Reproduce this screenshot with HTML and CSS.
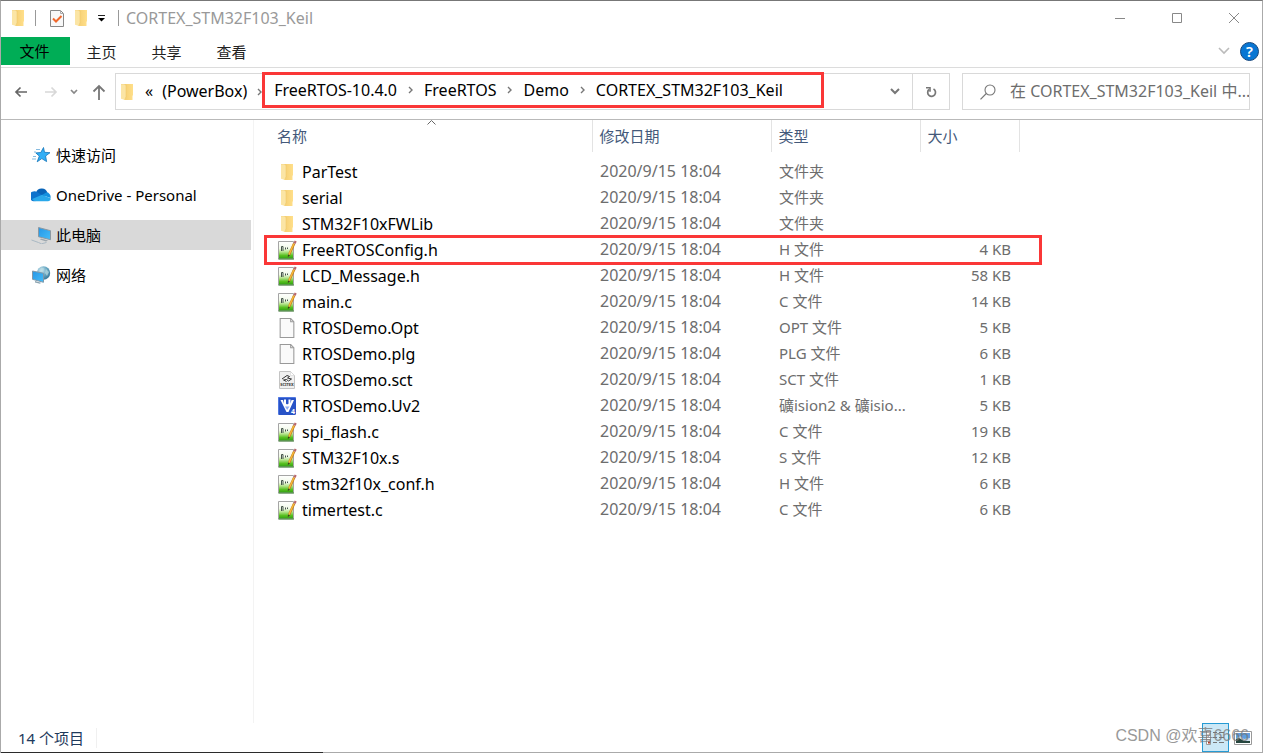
FILE: index.html
```html
<!DOCTYPE html>
<html lang="zh-CN">
<head>
<meta charset="utf-8">
<title>CORTEX_STM32F103_Keil</title>
<link rel="stylesheet" href="styles.css">
</head>
<body>
<svg class="defs" aria-hidden="true">
  <defs>
    <linearGradient id="gold" x1="0" x2="1" y1="0" y2="0"><stop offset="0" stop-color="#f5ce72"/><stop offset="1" stop-color="#ffdf8a"/></linearGradient>
    <linearGradient id="green" x1="0" x2="0" y1="0" y2="1"><stop offset="0" stop-color="#fff"/><stop offset=".4" stop-color="#f1f9e8"/><stop offset=".6" stop-color="#b4e38a"/><stop offset=".8" stop-color="#58c020"/><stop offset="1" stop-color="#2b9c10"/></linearGradient>
    <linearGradient id="screen" x1="0" x2="1" y1="0" y2="1"><stop offset="0" stop-color="#2596e6"/><stop offset="1" stop-color="#45bdf8"/></linearGradient>
    <radialGradient id="globe" cx=".35" cy=".3" r=".8"><stop offset="0" stop-color="#cfe8f1"/><stop offset=".5" stop-color="#6aa9c4"/><stop offset="1" stop-color="#2f6f92"/></radialGradient>
  </defs>
  <symbol id="folder" viewBox="0 0 12 16"><path d="M3 0h9v11.500h-.5V16H3z" fill="url(#gold)"/><path d="M0 0h3.500l1.500 1.500V12.500l-1 3.500L0 14.800z" fill="#fbe5a5"/><path d="M0 0h3.500L5 1.500v11l-1 3" fill="none" stroke="#edc766" stroke-width=".5"/></symbol>
  <symbol id="source" viewBox="0 0 20 20"><path d="M1.500 1.500h15v17.500h-15z" fill="url(#green)" stroke="#a5a5a5"/><path d="M1.500 19h15.500" fill="none" stroke="#4a8c40"/><path d="M4.500 11V6.500h1.500V11M8.500 9.500V7.500M10.500 9V7.500" fill="none" stroke="#45544a"/><path d="M17.200 3.500l-5 11" stroke="#c07a1a" stroke-width="2.400"/><path d="M17 3.500l-5 11" stroke="#f8b93c" stroke-width="1.400"/><path d="M16.500 3l1.200-2.500 2 .9-1.200 2.500z" fill="#b8686c"/><path d="M11 14.500l-.2 2.500 2.200-1.600z" fill="#46391e"/></symbol>
  <symbol id="blank" viewBox="0 0 16 19"><path d="M1.500.5h10l3 3v15h-13z" fill="#fafafa" stroke="#999"/><path d="M11.500.5v3h3" fill="none" stroke="#999"/></symbol>
  <symbol id="chev-r" viewBox="0 0 5 8"><path d="M1 1l3 3-3 3" fill="none" stroke="#777" stroke-width="1.400"/></symbol>
</svg>

<div class="window">
  <header class="titlebar">
    <svg class="folder"><use href="#folder"/></svg>
    <span class="rule"></span>
    <button class="plain props" aria-label="属性"><svg width="14" height="17" viewBox="0 0 14 17"><path d="M.5.500h10l3 3v13H.5z" fill="#f8f8f8" stroke="#888"/><path d="M10.500.5v3h3" fill="none" stroke="#aaa"/><path d="M3 8.500l3 3L11.500 6" fill="none" stroke="#f0682c" stroke-width="2"/></svg></button>
    <button class="plain" aria-label="新建文件夹"><svg class="folder"><use href="#folder"/></svg></button>
    <button class="plain custom" aria-label="自定义"><svg width="7" height="7" viewBox="0 0 7 7"><path d="M0 .5h7" stroke="#222"/><path d="M0 3h7L3.500 6.500z" fill="#000"/></svg></button>
    <span class="rule"></span>
    <h1>CORTEX_STM32F103_Keil</h1>
    <div class="controls">
      <button class="plain" aria-label="最小化"><svg width="12" height="12" viewBox="0 0 12 12"><path d="M1 6.500h10" stroke="#888"/></svg></button>
      <button class="plain" aria-label="最大化"><svg width="12" height="12" viewBox="0 0 12 12"><path d="M1.500 1.500h9v9h-9z" fill="none" stroke="#888"/></svg></button>
      <button class="plain" aria-label="关闭"><svg width="12" height="12" viewBox="0 0 12 12"><path d="M1 1l10 10M11 1L1 11" stroke="#888"/></svg></button>
    </div>
  </header>

  <nav class="ribbon">
    <button class="tab file">文件</button>
    <button class="tab">主页</button>
    <button class="tab">共享</button>
    <button class="tab">查看</button>
    <div class="help">
      <button class="plain" aria-label="展开功能区"><svg width="12" height="8" viewBox="0 0 12 8"><path d="M1 1l5 5 5-5" fill="none" stroke="#bbb" stroke-width="1.600"/></svg></button>
      <button class="plain question">?</button>
    </div>
  </nav>

  <div class="navbar">
    <div class="arrows">
      <button class="plain" aria-label="后退"><svg width="14" height="12" viewBox="0 0 14 12"><path d="M13 6H2M6.500 1.500L2 6l4.500 4.500" fill="none" stroke="#666" stroke-width="1.700"/></svg></button>
      <button class="plain" aria-label="前进"><svg width="14" height="12" viewBox="0 0 14 12"><path d="M1 6h11M7.500 1.500L12 6l-4.500 4.500" fill="none" stroke="#d8d8d8" stroke-width="1.700"/></svg></button>
      <button class="plain" aria-label="最近位置"><svg width="8" height="6" viewBox="0 0 8 6"><path d="M1 1l3 3 3-3" fill="none" stroke="#888" stroke-width="1.700"/></svg></button>
      <button class="plain" aria-label="向上"><svg width="14" height="16" viewBox="0 0 14 16"><path d="M7 16V2M1.500 7.500L7 2l5.500 5.500" fill="none" stroke="#777" stroke-width="1.800"/></svg></button>
    </div>
    <div class="address">
      <svg class="folder"><use href="#folder"/></svg>
      <a class="more" href="#">«</a>
      <a href="#">(PowerBox)</a>
      <svg class="chev first"><use href="#chev-r"/></svg>
      <div class="marked">
        <a href="#">FreeRTOS-10.4.0</a><svg class="chev"><use href="#chev-r"/></svg><a href="#">FreeRTOS</a><svg class="chev"><use href="#chev-r"/></svg><a href="#">Demo</a><svg class="chev"><use href="#chev-r"/></svg><a href="#">CORTEX_STM32F103_Keil</a>
      </div>
      <button class="plain drop" aria-label="历史"><svg width="10" height="7" viewBox="0 0 10 7"><path d="M1 1l4 4 4-4" fill="none" stroke="#777" stroke-width="2"/></svg></button>
      <button class="plain refresh" aria-label="刷新"><svg width="12" height="12" viewBox="0 0 12 12"><path d="M4 3.500A3.900 3.900 0 1 0 8.500 3" fill="none" stroke="#777" stroke-width="1.700"/><path d="M1 1.800h4v4" fill="none" stroke="#777" stroke-width="1.600"/></svg></button>
    </div>
    <label class="search">
      <svg width="16" height="16" viewBox="0 0 16 16"><circle cx="10" cy="6" r="5" fill="none" stroke="#777" stroke-width="1.100"/><path d="M6.300 9.500L.5 15.300" stroke="#777" stroke-width="1.200"/></svg>
      <input type="text" aria-label="搜索" placeholder="在 CORTEX_STM32F103_Keil 中...">
    </label>
  </div>

  <div class="body">
    <aside class="sidebar">
      <a href="#"><svg width="20" height="18" viewBox="0 0 20 18"><path d="M12.500 1.500l1 4.800 5.500.4-4.400 3.300 1 5.600-4.800-3-4.600 3.200 2.100-5.700-3.500-3.200 5-.4z" fill="#31aef5" stroke="#1275ba" stroke-width=".8"/><path d="M5 3.500h4M3 6h2M2 10.500h3M1 13h4" stroke="#86bbe0"/></svg>快速访问</a>
      <a href="#"><svg width="20" height="18" viewBox="0 0 20 18"><path d="M5 6.500a6 6 0 0 1 11.500.5L12 11z" fill="#0864b8"/><path d="M5 15a5 5 0 1 1 1-9L14 11z" fill="#0d73cc"/><path d="M11 9l4.500-2.700A4.700 4.700 0 0 1 19.500 12z" fill="#1490df"/><path d="M1.200 13L11 8.800l8.500 3.400c.6 1.700-.8 3-2.500 3H5c-1.500 0-3.200-.7-3.800-2.200z" fill="#29a8ea"/></svg>OneDrive - Personal</a>
      <a href="#" class="current"><svg width="20" height="18" viewBox="0 0 20 18"><path d="M7.500 1.500l12 3.200v9l-12-3z" fill="url(#screen)" stroke="#8b98a2"/><path d="M10 12.500l7 2-2 1-6-2z" fill="#9ca6ad"/><path d="M.5 14l7 2.500 3 1.300 5-1.300" fill="none" stroke="#a9b8c3"/></svg>此电脑</a>
      <a href="#"><svg width="20" height="18" viewBox="0 0 20 18"><circle cx="12.500" cy="7" r="6.700" fill="url(#globe)"/><path d="M10 1.500l3 1-1 3-3 1zM15 3l3 3-2 4-2-3z" fill="#b9dbe1" opacity=".7"/><path d="M1.500 5l11 2.300v9l-11-3z" fill="url(#screen)" stroke="#7f99aa"/><path d="M4 15l6 1.800-1 1-5-1.300z" fill="#8ba3b0"/></svg>网络</a>
    </aside>
    <main class="content">
      <svg class="sort" width="9" height="5" viewBox="0 0 9 5"><path d="M.5 4.500l4-4 4 4" fill="none" stroke="#666"/></svg>
      <table>
        <colgroup><col class="c-name"><col class="c-date"><col class="c-type"><col class="c-size"></colgroup>
        <thead><tr><th>名称</th><th>修改日期</th><th>类型</th><th>大小</th></tr></thead>
        <tbody>
          <tr><td><span class="cell"><svg class="folder"><use href="#folder"/></svg>ParTest</span></td><td>2020/9/15 18:04</td><td>文件夹</td><td></td></tr>
          <tr><td><span class="cell"><svg class="folder"><use href="#folder"/></svg>serial</span></td><td>2020/9/15 18:04</td><td>文件夹</td><td></td></tr>
          <tr><td><span class="cell"><svg class="folder"><use href="#folder"/></svg>STM32F10xFWLib</span></td><td>2020/9/15 18:04</td><td>文件夹</td><td></td></tr>
          <tr class="boxed"><td><span class="cell"><svg><use href="#source"/></svg>FreeRTOSConfig.h</span></td><td>2020/9/15 18:04</td><td>H 文件</td><td>4 KB</td></tr>
          <tr><td><span class="cell"><svg><use href="#source"/></svg>LCD_Message.h</span></td><td>2020/9/15 18:04</td><td>H 文件</td><td>58 KB</td></tr>
          <tr><td><span class="cell"><svg><use href="#source"/></svg>main.c</span></td><td>2020/9/15 18:04</td><td>C 文件</td><td>14 KB</td></tr>
          <tr><td><span class="cell"><svg><use href="#blank"/></svg>RTOSDemo.Opt</span></td><td>2020/9/15 18:04</td><td>OPT 文件</td><td>5 KB</td></tr>
          <tr><td><span class="cell"><svg><use href="#blank"/></svg>RTOSDemo.plg</span></td><td>2020/9/15 18:04</td><td>PLG 文件</td><td>6 KB</td></tr>
          <tr><td><span class="cell"><svg class="small" viewBox="0 0 16 18"><path d="M.5.500h11l4 4v13H.5z" fill="#f0f0f0" stroke="#c4c4c4"/><path d="M11.500.5v4h4z" fill="#fff" stroke="#ccc" stroke-width=".5"/><path d="M3 8l5-3.500 2.500 1-2 1.500 4 1-3 2-2-1.500-3 .5 3 1.500" fill="none" stroke="#333"/><text x="8" y="15" font-size="4" font-weight="bold" text-anchor="middle" fill="#333">SCITEX</text></svg>RTOSDemo.sct</span></td><td>2020/9/15 18:04</td><td>SCT 文件</td><td>1 KB</td></tr>
          <tr><td><span class="cell"><svg class="small" viewBox="0 0 18 18"><rect width="18" height="18" rx="1.500" fill="#2853c7"/><path d="M.5 17V.5h17" fill="none" stroke="#5078e2"/><path d="M2.500 3H5l1 3.500V2.500h2V6.500c0 1 2.500 1 2.500 0V2.500h2v4l1-3.500H16l-5.500 12h-2z" fill="#fff"/><path d="M7 9.500h4.500L9.200 13z" fill="#92aff2"/><text x="15" y="16.500" font-size="7" font-weight="bold" text-anchor="middle" fill="#fff">4</text></svg>RTOSDemo.Uv2</span></td><td>2020/9/15 18:04</td><td>礦ision2 &amp; 礦isio...</td><td>5 KB</td></tr>
          <tr><td><span class="cell"><svg><use href="#source"/></svg>spi_flash.c</span></td><td>2020/9/15 18:04</td><td>C 文件</td><td>19 KB</td></tr>
          <tr><td><span class="cell"><svg><use href="#source"/></svg>STM32F10x.s</span></td><td>2020/9/15 18:04</td><td>S 文件</td><td>12 KB</td></tr>
          <tr><td><span class="cell"><svg><use href="#source"/></svg>stm32f10x_conf.h</span></td><td>2020/9/15 18:04</td><td>H 文件</td><td>6 KB</td></tr>
          <tr><td><span class="cell"><svg><use href="#source"/></svg>timertest.c</span></td><td>2020/9/15 18:04</td><td>C 文件</td><td>6 KB</td></tr>
        </tbody>
      </table>
    </main>
  </div>

  <footer class="status">
    <span class="count">14 个项目</span>
    <div class="views">
      <button class="plain details" aria-label="详细信息"><svg width="19" height="18" viewBox="0 0 19 18"><path d="M.5 1.500h4v14h-4z" fill="#fff" stroke="#999"/><path d="M1 6h4M1 11h4" stroke="#999"/><path d="M2 12.500h2v2H2z" fill="#b43a20"/><path d="M7 3.500h4M13 3.500h5M7 8.500h4M13 8.500h5M7 13.500h4M13 13.500h5" stroke="#777"/></svg></button>
      <button class="plain large" aria-label="大图标"><svg width="18" height="14" viewBox="0 0 18 14"><path d="M.5.5h17v13H.5z" fill="#fff" stroke="#999"/><path d="M2 2h14v10H2z" fill="#5e9fe0"/><path d="M2 8l4-3 4 3 6-1v5H2z" fill="#d5e4ed"/><path d="M2 8l3-1 5 3 6 0v2H2z" fill="#26463f"/></svg></button>
    </div>
    <span class="watermark">CSDN @欢喜6666</span>
  </footer>
</div>
</body>
</html>
```
FILE: styles.css
```css
* { box-sizing: border-box; }
body { margin: 0; font: 15px/20px "Noto Sans", "Noto Sans CJK SC", sans-serif; color: #000; background: #fff; }
svg { display: block; flex: none; }
a { color: inherit; text-decoration: none; }
.defs { position: absolute; width: 0; height: 0; }
.plain { border: 0; padding: 0; background: none; font: inherit; display: flex; align-items: center; justify-content: center; }
.folder { width: 12px; height: 16px; }

.window { position: relative; display: flex; flex-direction: column; min-height: 100vh; border: 1px solid #aaa; border-top-color: #777; }
.window::after { content: ""; position: absolute; left: 0; bottom: -1px; width: 322px; height: 1px; background: #2b2b2b; }

.titlebar { display: flex; align-items: center; height: 36px; padding: 0 0 2px 11px; color: #999; }
.titlebar .rule { width: 1px; height: 16px; background: #999; margin-left: 11px; }
.titlebar .props { margin: 0 11px 0 14px; }
.titlebar .custom { margin-left: 11px; }
.titlebar .custom + .rule { margin-left: 13px; }
h1 { margin: 0 0 0 7px; font-size: 16px; font-weight: 400; line-height: 20px; }
.controls { display: flex; margin-left: auto; }
.controls button { width: 57px; height: 34px; }

.ribbon { display: flex; align-items: flex-start; height: 31px; border-bottom: 1px solid #dcdcdc; }
.tab { width: 65px; height: 28px; padding: 2px 2px 0 0; border: 0; background: none; font: inherit; color: #222; }
.tab.file { width: 69px; background: #00ad56; color: #000; padding-top: 0; }
.help { display: flex; align-items: center; gap: 10px; height: 28px; margin-left: auto; padding-right: 3px; }
.question { width: 19px; height: 19px; border-radius: 50%; border: 1px solid #17477d; background: #0876d3; color: #fff; font-weight: 600; }

.navbar { display: flex; align-items: center; height: 52px; padding: 0 12px 4px 13px; border-bottom: 1px solid #b9b9b9; }
.arrows { display: flex; align-items: center; width: 101px; gap: 16px; }
.arrows button:nth-child(3) { margin-left: -4px; }
.arrows button:nth-child(4) { margin-left: -2px; }
.address { position: relative; display: flex; align-items: center; flex: 1; height: 37px; border: 1px solid #d9d9d9; padding-left: 5px; min-width: 0; font-size: 16px; }
.address > a { padding-bottom: 2px; }
.more { margin: 0 9px 0 12px; }
.chev { width: 5px; height: 8px; margin: 0 11px; }
.chev.first { margin: 0 0 0 10px; }
.marked { display: flex; align-items: center; width: 562px; height: 36px; margin-top: -3px; padding-left: 9px; border: 3px solid #fa3737; }
.drop { margin: 0 12px 0 auto; }
.refresh { width: 37px; height: 35px; border-left: 1px solid #d9d9d9; }
.search { display: flex; align-items: center; gap: 14px; width: 288px; height: 37px; margin-left: 12px; border: 1px solid #d9d9d9; padding-left: 17px; }
.search input { flex: 1; min-width: 0; border: 0; padding: 0 0 2px; font: inherit; font-size: 16px; outline: none; background: none; }
.search input::placeholder { color: #6d6d6d; opacity: 1; }

.body { display: flex; flex: 1; }
.sidebar { display: flex; flex-direction: column; gap: 10px; width: 253px; padding: 20px 2px 0 0; border-right: 1px solid #f3f3f3; }
.sidebar a { display: flex; align-items: center; gap: 5px; height: 30px; padding-left: 30px; }
.sidebar .current { background: #d9d9d9; }
.content { position: relative; flex: 1; }
.sort { position: absolute; left: 173px; top: 0; }
table { table-layout: fixed; width: 765px; border-collapse: collapse; }
.c-name { width: 338px; }
.c-date { width: 179px; }
.c-type { width: 149px; }
.c-size { width: 99px; }
th { height: 32px; padding: 0 0 0 7px; border-right: 1px solid #e3e3e3; text-align: left; font-weight: 400; color: #44597a; }
th:first-child { padding-left: 23px; }
thead::after { content: ""; display: block; height: 7px; }
td { height: 26px; padding: 0 0 2px 8px; color: #6d6d6d; white-space: nowrap; }
td:first-child { padding: 0 0 0 23px; color: #000; font-size: 16px; }
td:nth-child(2) { font-size: 16px; }
td:last-child { text-align: right; padding-right: 8px; }
.cell { display: flex; align-items: center; gap: 5px; height: 24px; }
.cell svg { width: 20px; height: 20px; }
.cell svg.folder { width: 20px; height: 16px; }
.cell svg.small { height: 18px; }
.boxed { position: relative; }
.boxed td:last-child::after { content: ""; position: absolute; left: 10px; right: -23px; top: -2px; bottom: -2px; border: 3px solid #fa3737; }

.status { position: relative; display: flex; align-items: center; height: 29px; padding: 0 10px 0 17px; color: #1e395b; }
.count { padding-right: 12px; border-right: 1px solid #f0f0f0; }
.views { display: flex; align-items: center; gap: 5px; margin-left: auto; }
.details { width: 27px; height: 29px; border: 1px solid #269bd4; background: #cce8f6; }
.watermark { position: absolute; right: 13px; top: 3px; color: #777; opacity: .75; font-family: "Liberation Sans", "Noto Sans CJK SC", sans-serif; font-size: 16px; }
```
